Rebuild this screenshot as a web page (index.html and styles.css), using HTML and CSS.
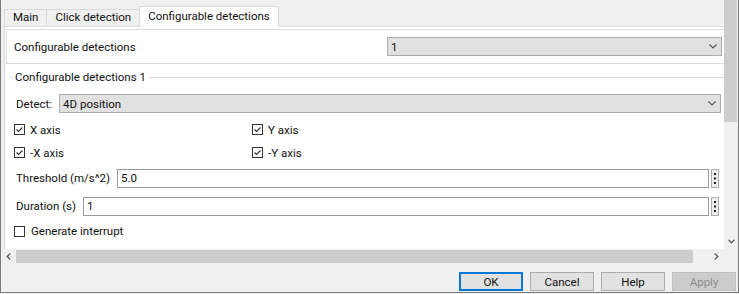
FILE: index.html
```html
<!DOCTYPE html>
<html lang="en">
<head>
    <meta charset="UTF-8">
    <title>Block Parameters</title>
    <link rel="stylesheet" href="styles.css">
</head>
<body>
    <div class="window">
        <div class="scroll-area">
            <div class="viewport">
                <div class="tabs">
                    <div class="tab">Main</div>
                    <div class="tab">Click detection</div>
                    <div class="tab active">Configurable detections</div>
                </div>

                <div class="pane">
                    <div class="param-box">
                        <span>Configurable detections</span>
                        <div class="combo count-combo">
                            <span>1</span>
                            <svg class="chevron" width="8" height="5" viewBox="0 0 8 5"><path d="M0.5 0.5 L4 4 L7.5 0.5" fill="none" stroke="#555" stroke-width="1.2"/></svg>
                        </div>
                    </div>

                    <div class="group">
                        <div class="group-title">Configurable detections 1</div>

                        <div class="field-row detect-row">
                            <span class="field-label">Detect:</span>
                            <div class="combo">
                                <span>4D position</span>
                                <svg class="chevron" width="8" height="5" viewBox="0 0 8 5"><path d="M0.5 0.5 L4 4 L7.5 0.5" fill="none" stroke="#555" stroke-width="1.2"/></svg>
                            </div>
                        </div>

                        <div class="check-grid">
                            <div class="check">
                                <svg width="11" height="11" viewBox="0 0 11 11"><rect x="0.5" y="0.5" width="10" height="10" fill="#fff" stroke="#333"/><path d="M2.5 5.5 L4.5 7.5 L8.5 3.5" fill="none" stroke="#333" stroke-width="1.1"/></svg>
                                <span>X axis</span>
                            </div>
                            <div class="check">
                                <svg width="11" height="11" viewBox="0 0 11 11"><rect x="0.5" y="0.5" width="10" height="10" fill="#fff" stroke="#333"/><path d="M2.5 5.5 L4.5 7.5 L8.5 3.5" fill="none" stroke="#333" stroke-width="1.1"/></svg>
                                <span>Y axis</span>
                            </div>
                            <div class="check">
                                <svg width="11" height="11" viewBox="0 0 11 11"><rect x="0.5" y="0.5" width="10" height="10" fill="#fff" stroke="#333"/><path d="M2.5 5.5 L4.5 7.5 L8.5 3.5" fill="none" stroke="#333" stroke-width="1.1"/></svg>
                                <span>-X axis</span>
                            </div>
                            <div class="check">
                                <svg width="11" height="11" viewBox="0 0 11 11"><rect x="0.5" y="0.5" width="10" height="10" fill="#fff" stroke="#333"/><path d="M2.5 5.5 L4.5 7.5 L8.5 3.5" fill="none" stroke="#333" stroke-width="1.1"/></svg>
                                <span>-Y axis</span>
                            </div>
                        </div>

                        <div class="field-row text-row">
                            <span class="field-label">Threshold (m/s^2)</span>
                            <div class="text-input">5.0</div>
                            <div class="dots-button">
                                <svg width="2" height="11" viewBox="0 0 2 11"><rect x="0" y="0" width="2" height="2" fill="#222"/><rect x="0" y="4.5" width="2" height="2" fill="#222"/><rect x="0" y="9" width="2" height="2" fill="#222"/></svg>
                            </div>
                        </div>

                        <div class="field-row text-row">
                            <span class="field-label">Duration (s)</span>
                            <div class="text-input">1</div>
                            <div class="dots-button">
                                <svg width="2" height="11" viewBox="0 0 2 11"><rect x="0" y="0" width="2" height="2" fill="#222"/><rect x="0" y="4.5" width="2" height="2" fill="#222"/><rect x="0" y="9" width="2" height="2" fill="#222"/></svg>
                            </div>
                        </div>

                        <div class="check interrupt">
                            <svg width="11" height="11" viewBox="0 0 11 11"><rect x="0.5" y="0.5" width="10" height="10" fill="#fff" stroke="#333"/></svg>
                            <span>Generate interrupt</span>
                        </div>
                    </div>
                </div>
            </div>

            <div class="vscroll">
                <div class="vthumb"></div>
                <div class="arrow-box">
                    <svg width="7" height="5" viewBox="0 0 7 5"><path d="M0.5 0.8 L3.5 3.8 L6.5 0.8" fill="none" stroke="#606060" stroke-width="1.4"/></svg>
                </div>
            </div>

            <div class="hscroll">
                <div class="arrow-box">
                    <svg width="5" height="7" viewBox="0 0 5 7"><path d="M4.2 0.5 L1.2 3.5 L4.2 6.5" fill="none" stroke="#606060" stroke-width="1.4"/></svg>
                </div>
                <div class="hthumb"></div>
                <div class="arrow-box right-arrow">
                    <svg width="5" height="7" viewBox="0 0 5 7"><path d="M0.8 0.5 L3.8 3.5 L0.8 6.5" fill="none" stroke="#606060" stroke-width="1.4"/></svg>
                </div>
            </div>

            <div class="corner"></div>
        </div>

        <div class="actions">
            <button class="dlg-button default">OK</button>
            <button class="dlg-button">Cancel</button>
            <button class="dlg-button">Help</button>
            <button class="dlg-button" disabled>Apply</button>
        </div>
    </div>
</body>
</html>
```

FILE: styles.css
```css
body {
    margin: 0;
    background-color: #f0f0f0;
    font-family: Roboto, "Liberation Sans", sans-serif;
    font-size: 11.5px;
    color: #111;
}
.window {
    width: 739px;
    height: 293px;
    box-sizing: border-box;
    border: 1px solid #7a7a7a;
    border-top: none;
    display: flex;
    flex-direction: column;
    background-color: #f0f0f0;
}

/* scrolling region with both scrollbars */
.scroll-area {
    display: grid;
    grid-template-columns: 1fr 14px;
    grid-template-rows: 249px 14px;
}
.viewport {
    overflow: hidden;
    padding: 6px 0 0 3px;
}
.tabs {
    display: flex;
    align-items: flex-end;
    height: 20px;
}
.tab {
    height: 17px;
    box-sizing: border-box;
    padding: 0 8px;
    border: 1px solid #d9d9d9;
    border-bottom: none;
    background-color: #f0f0f0;
    line-height: 15px;
    white-space: nowrap;
}
.tab + .tab {
    margin-left: -1px;
}
.tab.active {
    height: 21px;
    margin-bottom: -1px;
    background-color: #fff;
    line-height: 19px;
    padding: 0 8px;
    position: relative;
    z-index: 1;
}
.pane {
    width: 730px;
    height: 240px;
    box-sizing: border-box;
    border: 1px solid #d9d9d9;
    background-color: #fff;
    padding: 2px 1px 0;
}
.param-box {
    display: flex;
    align-items: center;
    justify-content: space-between;
    height: 35px;
    box-sizing: border-box;
    border: 1px solid #dcdcdc;
    padding: 0 9px 0 7px;
}
.combo {
    display: flex;
    align-items: center;
    justify-content: space-between;
    height: 19px;
    box-sizing: border-box;
    border: 1px solid #adadad;
    background-color: #e1e1e1;
    padding: 0 3px 0 3px;
}
.count-combo {
    width: 335px;
}
.chevron {
    margin-right: 1px;
}

/* group box */
.group {
    padding: 0 11px 0 0;
}
.group-title {
    display: flex;
    align-items: center;
    height: 16px;
    margin: 5px -11px 0 4px;
    white-space: nowrap;
}
.group-title::before {
    content: "";
    width: 3px;
    border-top: 1px solid #dcdcdc;
    margin-right: 2px;
}
.group-title::after {
    content: "";
    flex: 1;
    border-top: 1px solid #dcdcdc;
    margin-left: 3px;
}
.field-row {
    display: flex;
    align-items: center;
    padding-left: 10px;
}
.detect-row {
    margin-top: 9px;
    height: 19px;
}
.detect-row .combo {
    flex: 1;
}
.field-label {
    margin-right: 7px;
    white-space: nowrap;
}
.check-grid {
    display: grid;
    grid-template-columns: 238px 1fr;
    grid-auto-rows: 23px;
    margin-top: 5px;
    padding-left: 8px;
}
.check {
    display: flex;
    align-items: center;
    gap: 5px;
}
.text-row {
    height: 28px;
    padding-right: 2px;
}
.text-input {
    flex: 1;
    height: 19px;
    box-sizing: border-box;
    border: 1px solid #999;
    background-color: #fff;
    padding: 0 3px;
    line-height: 17px;
}
.dots-button {
    width: 8px;
    height: 19px;
    box-sizing: border-box;
    margin-left: 2px;
    border: 1px solid #adadad;
    background-color: #ececec;
    display: flex;
    align-items: center;
    justify-content: center;
}
.interrupt {
    height: 22px;
    padding-left: 8px;
    gap: 6px;
}

/* scrollbars */
.vscroll {
    display: flex;
    flex-direction: column;
    justify-content: space-between;
    background-color: #f0f0f0;
}
.vthumb {
    height: 122px;
    margin-right: 1px;
    background-color: #cdcdcd;
}
.arrow-box {
    width: 14px;
    height: 15px;
    display: flex;
    align-items: center;
    justify-content: center;
}
.hscroll {
    display: flex;
    align-items: center;
    background-color: #f0f0f0;
}
.hscroll .arrow-box {
    width: 15px;
    height: 14px;
}
.hthumb {
    width: 677px;
    height: 13px;
    background-color: #cdcdcd;
}
.right-arrow {
    margin-left: auto;
}
.corner {
    background-color: #f0f0f0;
}

/* dialog buttons */
.actions {
    display: flex;
    justify-content: flex-end;
    gap: 7px;
    padding: 9px 2px 0 0;
}
.dlg-button {
    width: 64px;
    height: 19px;
    box-sizing: border-box;
    border: 1px solid #adadad;
    background-color: #e1e1e1;
    font-family: inherit;
    font-size: 11.5px;
    color: #111;
    padding: 0;
}
.dlg-button.default {
    border: 2px solid #0078d7;
}
.dlg-button:disabled {
    background-color: #cccccc;
    border-color: #bfbfbf;
    color: #8c8c8c;
}
```
